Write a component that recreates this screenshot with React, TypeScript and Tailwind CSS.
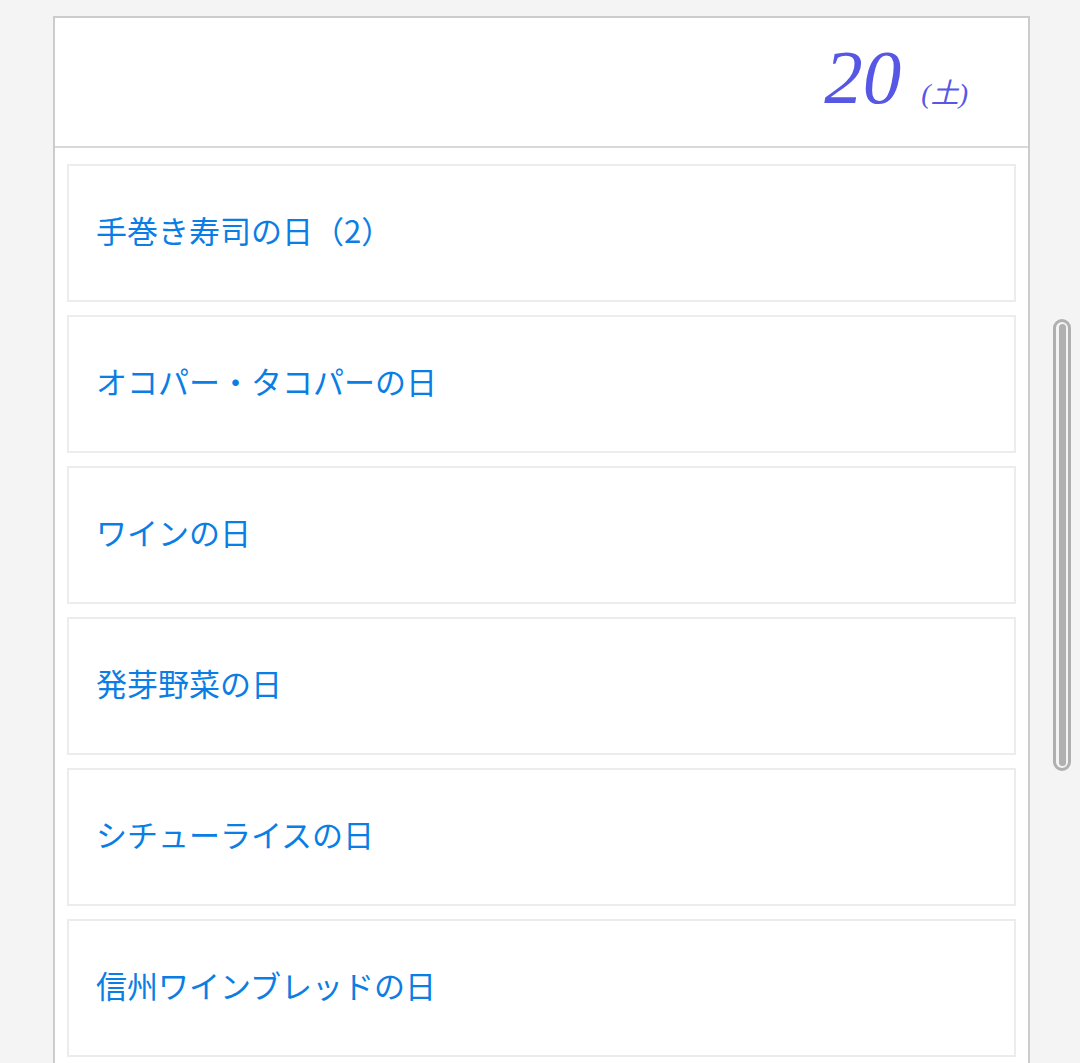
import React from 'react';

const events = [
  '手巻き寿司の日（2）',
  'オコパー・タコパーの日',
  'ワインの日',
  '発芽野菜の日',
  'シチューライスの日',
  '信州ワインブレッドの日',
];

export default function App() {
  return (
    <div className="flex h-screen overflow-hidden bg-[#f4f4f4] pl-[53px] pt-[16px]">
      <div className="w-[977px] shrink-0 self-start border-2 border-[#cccccc] bg-white">
        <div className="flex h-[130px] items-center justify-end border-b-2 border-[#d9d9d9] pb-[10px] pr-[60px]">
          <div className="flex items-baseline italic text-[#5757e6] [font-family:'Liberation_Serif','Noto_Sans_CJK_JP',serif]">
            <span className="text-[77px] leading-none">20</span>
            <span className="ml-[20px] text-[28px] leading-none">(土)</span>
          </div>
        </div>
        <div className="flex flex-col gap-[13px] px-3 pb-[40px] pt-[16px]">
          {events.map((name) => (
            <div
              key={name}
              className="flex h-[138px] items-center border-2 border-[#ececec] pb-[5px] pl-[27px]"
            >
              <span className="text-[31px] text-[#0a7ee4] [font-family:'Noto_Sans_CJK_JP',sans-serif]">
                {name}
              </span>
            </div>
          ))}
        </div>
      </div>
      <div className="ml-[23px] mt-[303px] flex h-[452px] w-[18px] shrink-0 justify-center rounded-full border-[3px] border-[#b0b0b0] p-[2px]">
        <div className="w-[7px] rounded-full bg-[#b0b0b0]" />
      </div>
    </div>
  );
}
